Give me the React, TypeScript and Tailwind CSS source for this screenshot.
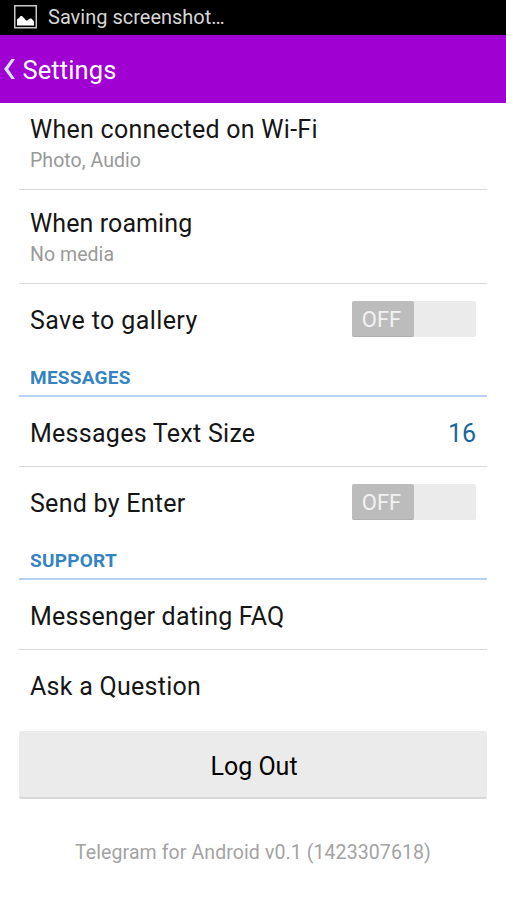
import type { ReactNode } from 'react';
import clsx from 'clsx';

function StatusBar() {
  return (
    <div className="flex h-[35px] items-center bg-black pl-3.5">
      <svg width="23" height="24" viewBox="0 0 23 24" className="mt-[-1px]">
        <rect x="0.75" y="0.75" width="21.5" height="22" fill="none" stroke="#c9c9c9" strokeWidth="1.5" />
        <path d="M3 20.500v-6l2-1.500 1.500-2h1.500l3 3 1 1.500h1l3-2h1.500l2.500 3v4z" fill="#fff" />
      </svg>
      <span className="mt-[-2px] ml-[11px] text-[20px] leading-[30px] text-[#d6d6d6]">Saving screenshot…</span>
    </div>
  );
}

function Header() {
  return (
    <header className="flex h-[68px] items-center bg-[#a000d2] pl-1">
      <svg width="11" height="20" viewBox="0 0 11 20">
        <path d="M7.500 0h3.500L4.200 10 11 20H7.500L0 10z" fill="#cfe6fb" />
      </svg>
      <h1 className="mt-0.5 ml-[7.5px] text-[25.5px] leading-8 tracking-[0.1px] text-white">Settings</h1>
    </header>
  );
}

function Toggle() {
  return (
    <div className="mb-0.5 h-[36px] w-[124px] rounded-[2px] bg-[#ebebeb]">
      <div className="flex h-full w-[62px] items-center justify-center rounded-[2px] border-b border-[#b0b0b0] bg-[#bcbcbc] pt-[3px] pr-[3px] text-[22px] text-[#f2f2f2]">
        OFF
      </div>
    </div>
  );
}

function Row({ title, last, className, children }: { title: string; last?: boolean; className?: string; children?: ReactNode }) {
  return (
    <div className={clsx('flex items-center justify-between px-[11px]', last ? 'h-[71px]' : 'h-[70px] border-b border-[#d9d9d9]')}>
      <span className={clsx('text-[25px] leading-8', last ? 'pt-0.5' : 'pt-1', className || 'tracking-[0.27px]')}>{title}</span>
      {children}
    </div>
  );
}

function DetailRow({ title, detail, className }: { title: string; detail: string; className: string }) {
  return (
    <div className={clsx('border-b border-[#d9d9d9] px-[11px]', className)}>
      <div className="text-[25px] leading-8">{title}</div>
      <div className="text-[19.5px] leading-[30px] tracking-[0.05px] text-[#999]">{detail}</div>
    </div>
  );
}

function Section({ title }: { title: string }) {
  return (
    <h2 className="h-[42px] border-b-2 border-[#b7d1f2] px-[11px] pt-2 text-[19px] font-bold leading-[30px] tracking-[0.25px] text-[#3484c3]">
      {title}
    </h2>
  );
}

export default function App() {
  return (
    <div className="h-[900px] w-[506px] overflow-hidden bg-white font-['Roboto',sans-serif] text-[#161616]">
      <StatusBar />
      <Header />
      <main className="px-[19px]">
        <DetailRow title="When connected on Wi-Fi" detail="Photo, Audio" className="h-[87px] pt-[11px] tracking-[0.27px]" />
        <DetailRow title="When roaming" detail="No media" className="h-[94px] pt-[18px] tracking-[0.1px]" />
        <Row title="Save to gallery" last className="tracking-[0.4px]">
          <Toggle />
        </Row>
        <Section title="MESSAGES" />
        <Row title="Messages Text Size">
          <span className="pt-1 text-[25px] leading-8 text-[#19679f]">16</span>
        </Row>
        <Row title="Send by Enter" last>
          <Toggle />
        </Row>
        <Section title="SUPPORT" />
        <Row title="Messenger dating FAQ" className="tracking-[0.17px]" />
        <Row title="Ask a Question" last />
        <button className="mt-2.5 flex h-[68px] w-full items-center justify-center rounded-[2px] border-b-2 border-[#d8d8d8] bg-[#ebebeb] pt-1.5 pl-0.5 text-[25px] leading-8 text-black">
          Log Out
        </button>
        <p className="mt-[38px] text-center text-[19.5px] leading-8 tracking-[0.1px] text-[#a3a3a3]">Telegram for Android v0.1 (1423307618)</p>
      </main>
    </div>
  );
}
